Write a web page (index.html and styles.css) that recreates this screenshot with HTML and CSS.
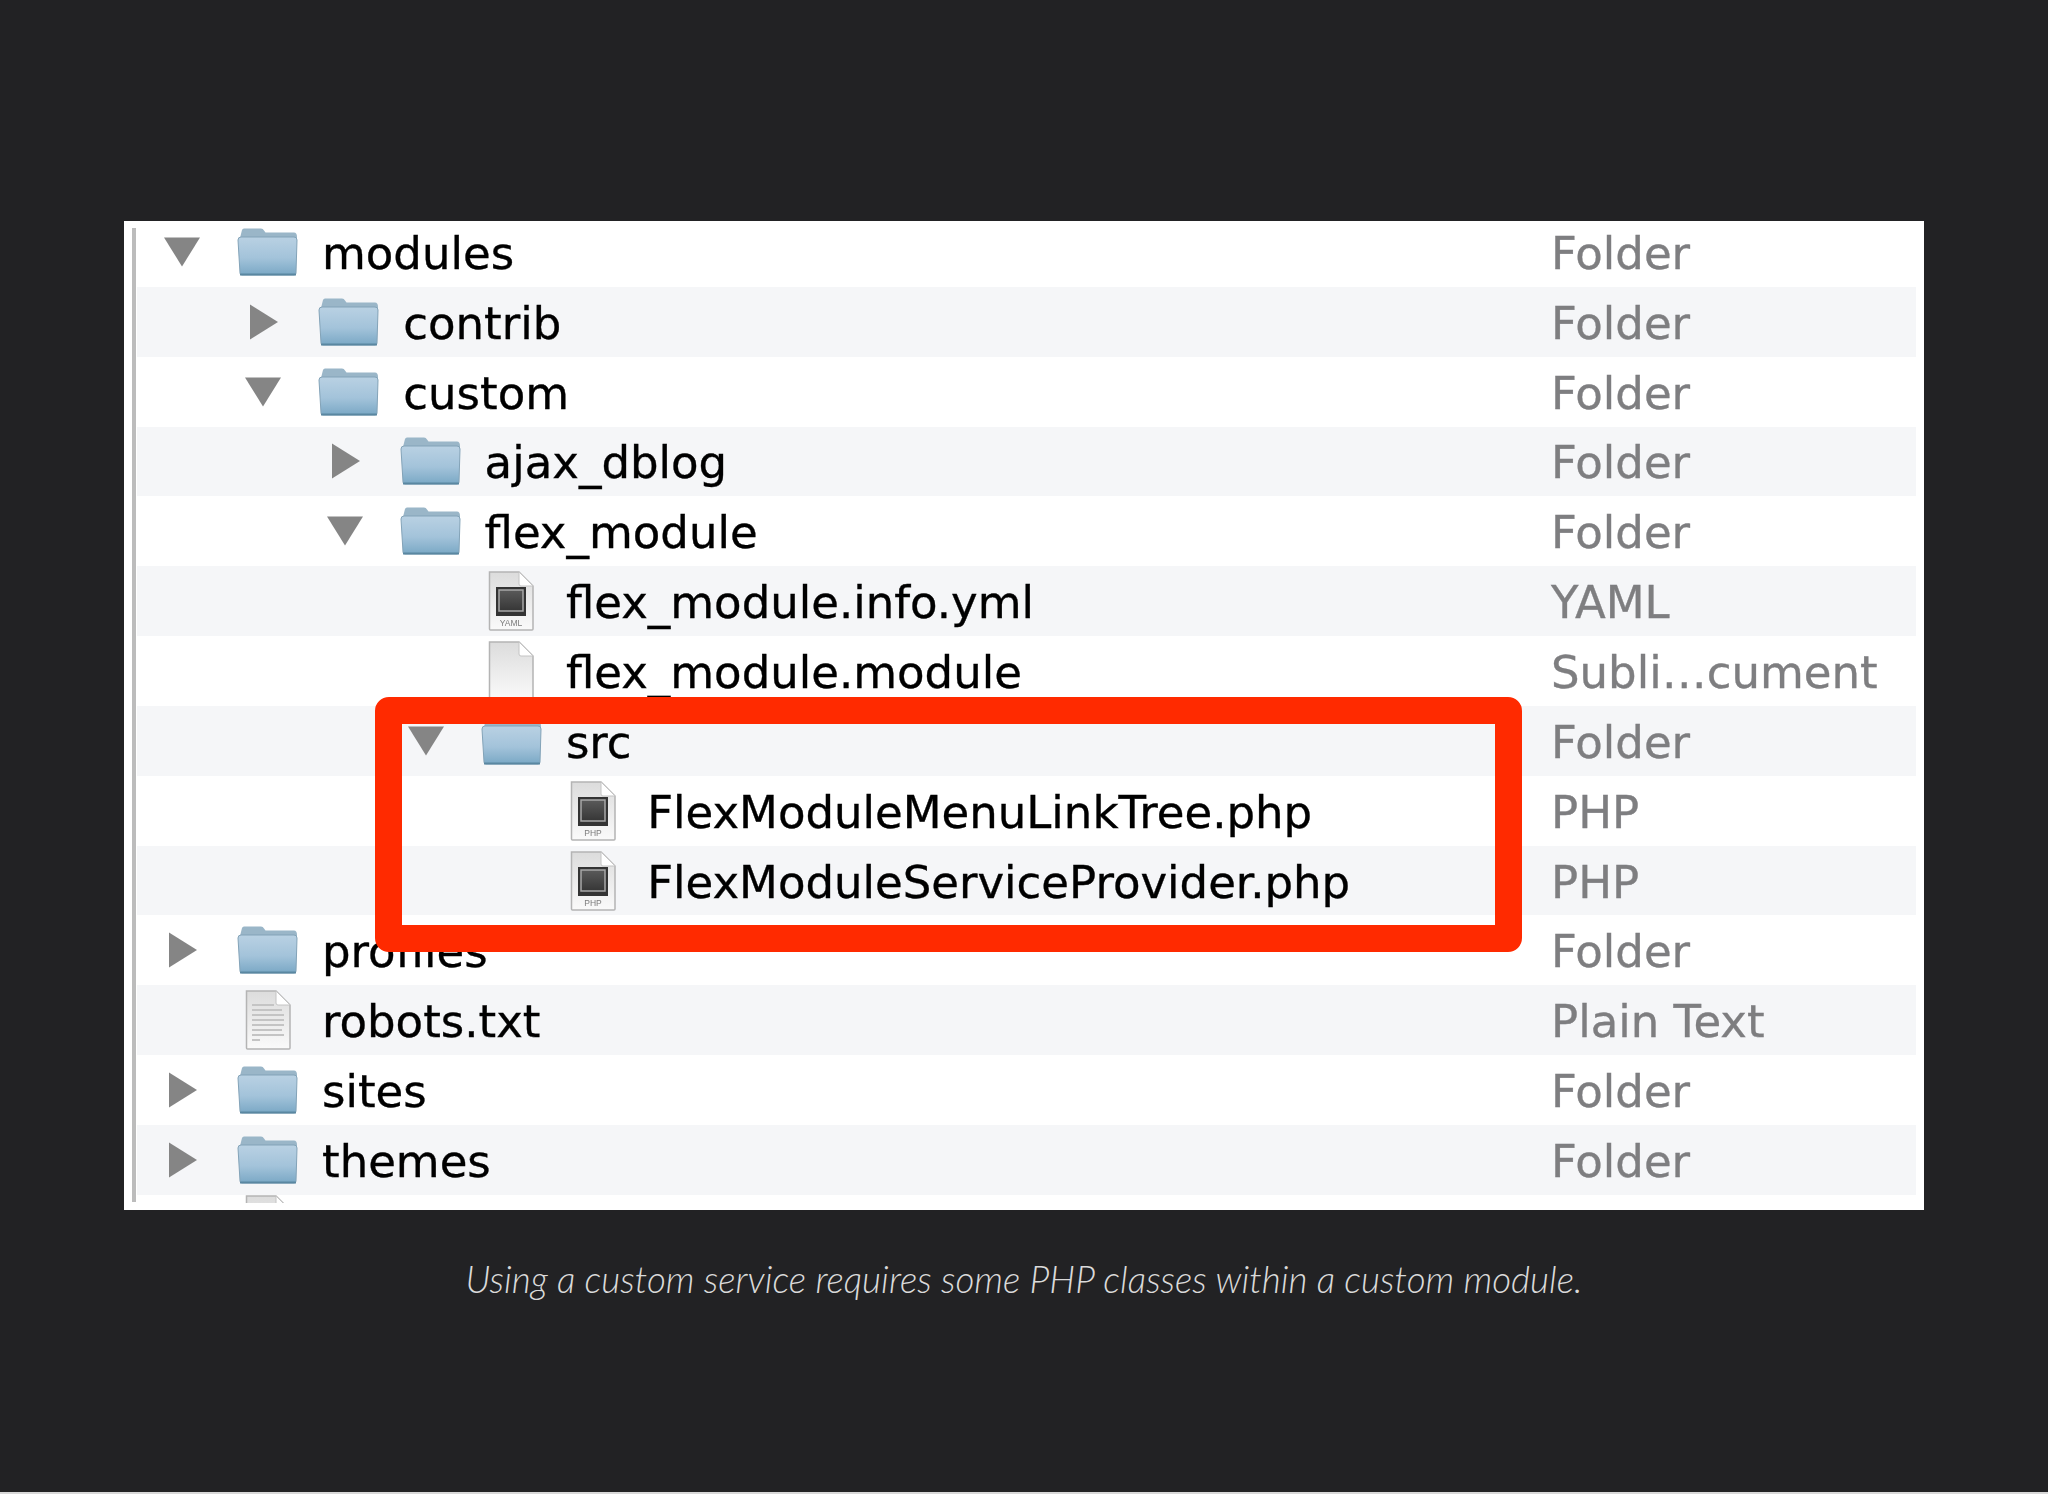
FILE: index.html
```html
<!DOCTYPE html>
<html lang="en">
  <head>
    <meta charset="utf-8">
    <title>Using a custom service</title>
    <link rel="stylesheet" href="styles.css">
  </head>
  <body>
    <svg class="defs" width="0" height="0">
      <defs>
        <linearGradient id="folderBody" x1="0" y1="0" x2="0" y2="1">
          <stop offset="0" stop-color="#b9d1e3"/>
          <stop offset="0.55" stop-color="#a3c3da"/>
          <stop offset="1" stop-color="#7aa8c5"/>
        </linearGradient>
        <linearGradient id="docBlank" x1="0" y1="0" x2="0" y2="1">
          <stop offset="0" stop-color="#dcdcdc"/>
          <stop offset="1" stop-color="#fafafa"/>
        </linearGradient>
        <linearGradient id="docSquare" x1="0" y1="0" x2="0" y2="1">
          <stop offset="0" stop-color="#5a5a5a"/>
          <stop offset="1" stop-color="#363636"/>
        </linearGradient>
        <symbol id="folder" viewBox="0 0 61 48">
          <path d="M3 10 L5 2 Q5.500 0.500 7 0.500 L24 0.500 Q26 0.500 27 2.500 L28.500 4.500 L57 4.500 Q60 4.500 60 9 L60 14 L3 14 Z" fill="#9ab6c8"/>
          <path d="M1 12 Q1 9 4 9 L57 9 Q60 9 60 12 L59 45 Q59 47 57 47 L5 47 Q3 47 3 45 Z" fill="url(#folderBody)" stroke="#83a3b8" stroke-width="1"/>
          <rect x="3" y="45.500" width="56" height="2" fill="#5a87a1"/>
        </symbol>
        <symbol id="arrow-down" viewBox="0 0 36 36">
          <path d="M0 3.500 H36 L18 32.500 Z" fill="#858585"/>
        </symbol>
        <symbol id="arrow-right" viewBox="0 0 36 36">
          <path d="M5 0.500 L33 18 L5 35.500 Z" fill="#858585"/>
        </symbol>
        <symbol id="doc-page" viewBox="0 0 46 60">
          <path d="M1.500 1 H31 L45 15 V58 Q45 59 44 59 H2.500 Q1.500 59 1.500 58 Z" fill="url(#docBlank)" stroke="#b4b4b4" stroke-width="1.500"/>
          <path d="M31 1 V13 Q31 15 33 15 H45 Z" fill="#fff" stroke="#c4c4c4" stroke-width="1"/>
        </symbol>
      </defs>
    </svg>

    <figure class="shot">
      <div class="listing">
        <div class="tree">

          <div class="row">
            <div class="name">
              <svg class="arrow"><use href="#arrow-down"/></svg>
              <svg class="folder"><use href="#folder"/></svg>
              <span>modules</span>
            </div>
            <div class="kind">Folder</div>
          </div>

          <div class="row level-1">
            <div class="name">
              <svg class="arrow"><use href="#arrow-right"/></svg>
              <svg class="folder"><use href="#folder"/></svg>
              <span>contrib</span>
            </div>
            <div class="kind">Folder</div>
          </div>

          <div class="row level-1">
            <div class="name">
              <svg class="arrow"><use href="#arrow-down"/></svg>
              <svg class="folder"><use href="#folder"/></svg>
              <span>custom</span>
            </div>
            <div class="kind">Folder</div>
          </div>

          <div class="row level-2">
            <div class="name">
              <svg class="arrow"><use href="#arrow-right"/></svg>
              <svg class="folder"><use href="#folder"/></svg>
              <span>ajax_dblog</span>
            </div>
            <div class="kind">Folder</div>
          </div>

          <div class="row level-2">
            <div class="name">
              <svg class="arrow"><use href="#arrow-down"/></svg>
              <svg class="folder"><use href="#folder"/></svg>
              <span>flex_module</span>
            </div>
            <div class="kind">Folder</div>
          </div>

          <div class="row level-3">
            <div class="name">
              <i class="arrow"></i>
              <svg class="doc" viewBox="0 0 46 60">
                <use href="#doc-page" width="46" height="60"/>
                <rect x="8" y="16" width="30" height="29" fill="#333"/>
                <rect x="11" y="19" width="24" height="21" fill="url(#docSquare)" stroke="#a8a8a8" stroke-width="1.500"/>
                <text class="doc-label" x="23" y="55">YAML</text>
              </svg>
              <span>flex_module.info.yml</span>
            </div>
            <div class="kind">YAML</div>
          </div>

          <div class="row level-3">
            <div class="name">
              <i class="arrow"></i>
              <svg class="doc" viewBox="0 0 46 60">
                <use href="#doc-page" width="46" height="60"/>
              </svg>
              <span>flex_module.module</span>
            </div>
            <div class="kind">Subli…cument</div>
          </div>

          <div class="row level-3">
            <div class="name">
              <svg class="arrow"><use href="#arrow-down"/></svg>
              <svg class="folder"><use href="#folder"/></svg>
              <span>src</span>
            </div>
            <div class="kind">Folder</div>
          </div>

          <div class="row level-4">
            <div class="name">
              <i class="arrow"></i>
              <svg class="doc" viewBox="0 0 46 60">
                <use href="#doc-page" width="46" height="60"/>
                <rect x="8" y="16" width="30" height="29" fill="#333"/>
                <rect x="11" y="19" width="24" height="21" fill="url(#docSquare)" stroke="#a8a8a8" stroke-width="1.500"/>
                <text class="doc-label" x="23" y="55">PHP</text>
              </svg>
              <span>FlexModuleMenuLinkTree.php</span>
            </div>
            <div class="kind">PHP</div>
          </div>

          <div class="row level-4">
            <div class="name">
              <i class="arrow"></i>
              <svg class="doc" viewBox="0 0 46 60">
                <use href="#doc-page" width="46" height="60"/>
                <rect x="8" y="16" width="30" height="29" fill="#333"/>
                <rect x="11" y="19" width="24" height="21" fill="url(#docSquare)" stroke="#a8a8a8" stroke-width="1.500"/>
                <text class="doc-label" x="23" y="55">PHP</text>
              </svg>
              <span>FlexModuleServiceProvider.php</span>
            </div>
            <div class="kind">PHP</div>
          </div>

          <div class="row">
            <div class="name">
              <svg class="arrow"><use href="#arrow-right"/></svg>
              <svg class="folder"><use href="#folder"/></svg>
              <span>profiles</span>
            </div>
            <div class="kind">Folder</div>
          </div>

          <div class="row">
            <div class="name">
              <i class="arrow"></i>
              <svg class="doc" viewBox="0 0 46 60">
                <use href="#doc-page" width="46" height="60"/>
                <g fill="#c4c4c4">
                  <rect x="7" y="14" width="22" height="2"/>
                  <rect x="7" y="19" width="30" height="2"/>
                  <rect x="7" y="24" width="32" height="2"/>
                  <rect x="7" y="29" width="32" height="2"/>
                  <rect x="7" y="34" width="32" height="2"/>
                  <rect x="7" y="39" width="30" height="2"/>
                  <rect x="7" y="44" width="32" height="2"/>
                  <rect x="7" y="49" width="8" height="2"/>
                </g>
              </svg>
              <span>robots.txt</span>
            </div>
            <div class="kind">Plain Text</div>
          </div>

          <div class="row">
            <div class="name">
              <svg class="arrow"><use href="#arrow-right"/></svg>
              <svg class="folder"><use href="#folder"/></svg>
              <span>sites</span>
            </div>
            <div class="kind">Folder</div>
          </div>

          <div class="row">
            <div class="name">
              <svg class="arrow"><use href="#arrow-right"/></svg>
              <svg class="folder"><use href="#folder"/></svg>
              <span>themes</span>
            </div>
            <div class="kind">Folder</div>
          </div>

          <!-- next row is cut off by the crop, only the top of its icon shows -->
          <div class="row row-cut">
            <div class="name">
              <i class="arrow"></i>
              <svg class="doc" viewBox="0 0 46 60">
                <use href="#doc-page" width="46" height="60"/>
              </svg>
            </div>
          </div>

        </div>

        <div class="highlight"></div>
      </div>

      <figcaption class="caption">
        Using a custom service requires some PHP classes within a custom module.
      </figcaption>
    </figure>

    <div class="page-end"></div>
  </body>
</html>
```

FILE: styles.css
```css
html, body {
  height: 100%;
}
body {
  display: flex;
  flex-direction: column;
  margin: 0;
  background-color: #222224;
  font-family: "DejaVu Sans", sans-serif;
}
.defs {
  display: block;
  flex: none;
  height: 0;
}
.shot {
  flex: 1;
  margin: 0;
  padding: 221px 124px 0;
}
.page-end {
  flex: none;
  height: 2px;
  background-color: #d8d8d8;
}
.listing {
  position: relative;
  height: 989px;
  overflow: hidden;
  background-color: #fff;
  filter: blur(0.5px);
}
/* the grey rule down the left side of the sidebar */
.listing::before {
  content: "";
  position: absolute;
  left: 8px;
  top: 7px;
  bottom: 8px;
  width: 4px;
  background-color: #bcbcbc;
  z-index: 1;
}
.tree {
  margin: -4px 8px 0 13px;
}
.row {
  display: flex;
  align-items: center;
  height: 69.85px;
  font-size: 45px;
  color: #000;
  -webkit-text-stroke: 0.35px currentColor;
}
.row:nth-child(even) {
  background-color: #f5f6f8;
}
.row-cut {
  height: 8px;
  overflow: hidden;
  background-color: #fff !important;
  align-items: flex-start;
}
.name {
  display: flex;
  align-items: center;
  flex: 1;
  min-width: 0;
  white-space: nowrap;
}
.name span,
.kind {
  padding-top: 3px;
}
.level-1 .name { padding-left: 81.3px; }
.level-2 .name { padding-left: 162.6px; }
.level-3 .name { padding-left: 243.9px; }
.level-4 .name { padding-left: 325.2px; }
.arrow {
  display: block;
  flex: none;
  width: 36px;
  height: 36px;
  margin-left: 27px;
  margin-right: 37px;
}
.folder {
  display: block;
  flex: none;
  width: 61px;
  height: 48px;
  margin-right: 24px;
}
.doc {
  display: block;
  flex: none;
  width: 46px;
  height: 60px;
  margin: 0 31.5px 0 7.5px;
}
.doc-label {
  font-family: "Liberation Sans", sans-serif;
  font-size: 8.5px;
  fill: #7c7c7c;
  stroke: none;
  -webkit-text-stroke: 0;
  text-anchor: middle;
}
.kind {
  flex: none;
  width: 365px;
  color: #7e7e80;
  white-space: nowrap;
}
.highlight {
  position: absolute;
  left: 251px;
  top: 476px;
  width: 1147px;
  height: 255px;
  box-sizing: border-box;
  border: 27px solid #ff2a00;
  border-radius: 14px;
}
.caption {
  margin-top: 47px;
  text-align: center;
  font-family: Lato, sans-serif;
  font-size: 36.8px;
  font-style: italic;
  font-weight: 300;
  color: #dadada;
}
```
